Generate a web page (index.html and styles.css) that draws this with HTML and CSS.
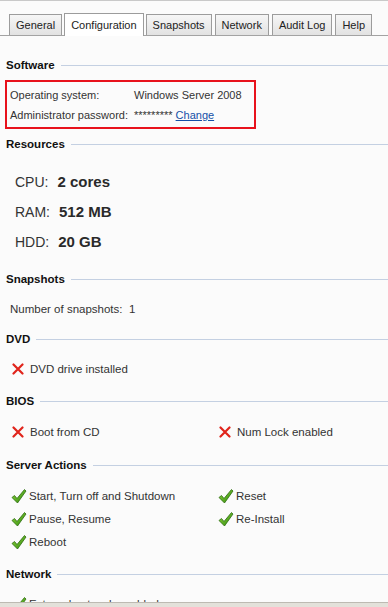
FILE: index.html
```html
<!DOCTYPE html>
<html>
<head>
<meta charset="utf-8">
<link rel="stylesheet" href="styles.css">
</head>
<body>
<svg width="0" height="0" class="defs">
  <defs>
    <symbol id="x" viewBox="0 0 12 12">
      <path d="M1.5 1.5 L10.5 10.5 M10.5 1.5 L1.5 10.5" stroke="#e0241b" stroke-width="2.2" stroke-linecap="round" fill="none"/>
    </symbol>
    <linearGradient id="g" x1="0" y1="0" x2="1" y2="1">
      <stop offset="0" stop-color="#8fd43a"/>
      <stop offset="1" stop-color="#2f8a0e"/>
    </linearGradient>
    <symbol id="ok" viewBox="0 0 16 16">
      <path d="M1 9.5 L3.5 7.5 L6 10.5 L13.5 1.5 L15 3 L6.5 15 Z" fill="url(#g)" stroke="#2c6b10" stroke-width="0.8" stroke-linejoin="round"/>
    </symbol>
  </defs>
</svg>
<div class="tabs">
  <div class="tab">General</div>
  <div class="tab active">Configuration</div>
  <div class="tab">Snapshots</div>
  <div class="tab">Network</div>
  <div class="tab">Audit Log</div>
  <div class="tab">Help</div>
</div>

<div class="content">
  <h2 class="sec s-software">Software</h2>
  <div class="redbox">
    <div class="kv"><span class="k">Operating system:</span><span>Windows Server 2008</span></div>
    <div class="kv"><span class="k">Administrator password:</span><span>********* <a href="#" class="link">Change</a></span></div>
  </div>

  <h2 class="sec s-res">Resources</h2>
  <div class="res">
    <div class="rrow"><span>CPU:</span><b>2 cores</b></div>
    <div class="rrow"><span>RAM:</span><b>512 MB</b></div>
    <div class="rrow"><span>HDD:</span><b>20 GB</b></div>
  </div>

  <h2 class="sec s-snap">Snapshots</h2>
  <div class="plain">Number of snapshots:&nbsp; 1</div>

  <h2 class="sec s-dvd">DVD</h2>
  <div class="grid g-dvd">
    <div class="item"><svg class="ix"><use href="#x"/></svg>DVD drive installed</div>
  </div>

  <h2 class="sec s-bios">BIOS</h2>
  <div class="grid g-bios">
    <div class="item"><svg class="ix"><use href="#x"/></svg>Boot from CD</div>
    <div class="item"><svg class="ix"><use href="#x"/></svg>Num Lock enabled</div>
  </div>

  <h2 class="sec s-act">Server Actions</h2>
  <div class="grid g-act">
    <div class="item"><svg class="ic"><use href="#ok"/></svg>Start, Turn off and Shutdown</div>
    <div class="item"><svg class="ic"><use href="#ok"/></svg>Reset</div>
    <div class="item"><svg class="ic"><use href="#ok"/></svg>Pause, Resume</div>
    <div class="item"><svg class="ic"><use href="#ok"/></svg>Re-Install</div>
    <div class="item"><svg class="ic"><use href="#ok"/></svg>Reboot</div>
  </div>

  <h2 class="sec s-net">Network</h2>
  <div class="grid g-net">
    <div class="item"><svg class="ic"><use href="#ok"/></svg>External network enabled</div>
  </div>
</div>
<div class="frame-bottom"></div>
</body>
</html>
```

FILE: styles.css
```css
html, body {
  margin: 0;
  padding: 0;
}
body {
  background: #fbfbfb;
  border-top: 1px solid #c9c9c9;
  font-family: "Liberation Sans", Arial, sans-serif;
  font-size: 11.5px;
  color: #333;
  height: 606px;
  overflow: hidden;
}
.defs { position: absolute; width: 0; height: 0; }

.tabs {
  display: flex;
  align-items: flex-end;
  gap: 3px;
  padding: 0 0 0 9px;
  height: 34px;
  border-bottom: 1px solid #a3a3a3;
}
.tab {
  flex: none;
  white-space: nowrap;
  box-sizing: border-box;
  height: 21px;
  line-height: 20px;
  padding: 0 6px;
  border: 1px solid #9c9c9c;
  border-bottom: none;
  background: linear-gradient(#f6f6f6, #e2e2e2);
  color: #222;
  font-size: 11px;
}
.tab.active {
  background: #fff;
  height: 23px;
  margin: 0 -1px -1px -1px;
  line-height: 22px;
  padding: 0 6px;
}

.content { padding: 0; }

.sec {
  display: flex;
  align-items: center;
  margin: 0;
  padding-left: 6px;
  height: 16px;
  font-size: 11.5px;
  font-weight: bold;
  color: #111;
}
.sec::after {
  content: "";
  flex: 1;
  border-top: 1px solid #c4d0e2;
  margin-left: 6px;
}
.s-software { margin-top: 21px; }
.s-res { margin-top: 7px; }
.s-snap { margin-top: 14px; }
.s-dvd { margin-top: 12px; }
.s-bios { margin-top: 14px; }
.s-act { margin-top: 15px; }
.s-net { margin-top: 13px; }

.redbox {
  box-sizing: border-box;
  margin: 7px 0 0 5px;
  width: 251px;
  border: 2px solid #e8121c;
  padding: 3px 0 2px 3px;
  font-size: 11px;
}
.kv {
  display: flex;
  line-height: 20px;
}
.k { width: 124px; flex: none; white-space: nowrap; }
.link { color: #1450a8; text-decoration: underline; }

.res { margin-top: 15px; padding-left: 15px; }
.rrow {
  display: flex;
  gap: 9px;
  line-height: 30px;
  font-size: 14px;
  color: #333;
}
.rrow b { font-size: 15px; color: #2a2a2a; }

.plain { margin-top: 12px; padding-left: 10px; line-height: 20px; }

.grid {
  display: grid;
  grid-template-columns: 207px 1fr;
  padding-left: 11px;
}
.g-dvd, .g-net { margin-top: 12px; }
.g-bios { margin-top: 13px; }
.g-act { margin-top: 11px; }
.g-dvd .item, .g-bios .item, .g-net .item { height: 20px; }
.g-act .item { height: 23px; }
.item {
  display: flex;
  align-items: center;
}
.ix { width: 12px; height: 12px; margin: 0 6px 0 1px; flex: none; }
.ic { width: 16px; height: 16px; margin-right: 2px; flex: none; }

.frame-bottom {
  position: fixed;
  left: 0;
  right: 0;
  bottom: 0;
  height: 4px;
  border-top: 1px solid #bdbab2;
  background: #e3e1da;
}
```
